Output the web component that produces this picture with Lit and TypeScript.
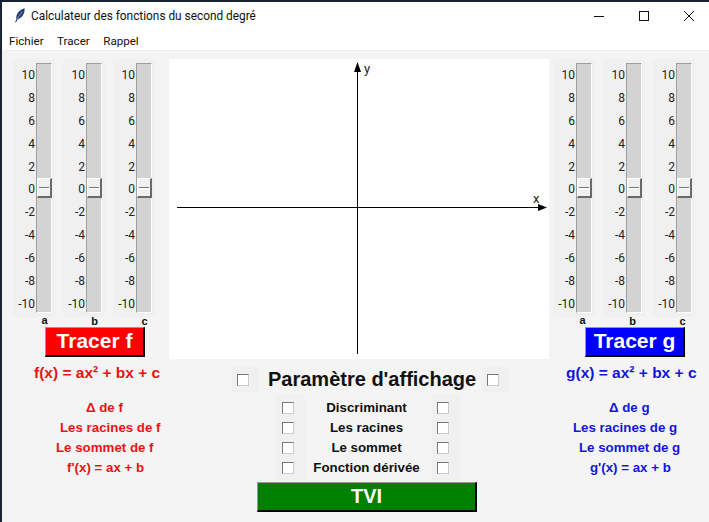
import { LitElement, html, css, svg } from "lit";
import { customElement } from "lit/decorators.js";

const TICKS = [10, 8, 6, 4, 2, 0, -2, -4, -6, -8, -10];
const LEFT_LABELS: [string, number][] = [["Δ de f", 84], ["Les racines de f", 58], ["Le sommet de f", 54], ["f'(x) = ax + b", 65]];
const RIGHT_LABELS: [string, number][] = [["Δ de g", 149], ["Les racines de g", 113], ["Le sommet de g", 119], ["g'(x) = ax + b", 130]];
const MIDDLE = ["Discriminant", "Les racines", "Le sommet", "Fonction dérivée"];

@customElement("app-root")
export class AppRoot extends LitElement {
  static styles = css`
    :host { display: block; width: 709px; height: 522px; background: #1b2433; padding: 2px 0 0 2px; box-sizing: border-box; overflow: hidden; font-family: "Liberation Sans", Arial, sans-serif; color: #111; }
    .win { width: 709px; height: 520px; background: #f4f4f4; display: flex; flex-direction: column; }
    .title { height: 28px; background: #fff; display: flex; align-items: center; flex: none; font: 11.85px Roboto, sans-serif; color: #111; padding-left: 10px; }
    .feather { width: 14px; height: 16px; margin-right: 5px; flex: none; }
    .title .txt { flex: 1; }
    .ctl { width: 45px; height: 28px; display: flex; align-items: center; justify-content: center; flex: none; }
    .menu { height: 18px; padding: 2px 0 0 7px; background: #fff; display: flex; align-items: center; flex: none; gap: 13.500px; font: 11.600px Roboto, sans-serif; border-bottom: 1px solid #ededed; }
    .main { display: grid; grid-template-columns: 167px 380px 1fr; height: 343px; flex: none; }
    .side { display: flex; flex-direction: column; align-items: center; }
    .sliders { display: flex; gap: 8px; padding: 8px 0 0 11px; align-self: flex-start; }
    .side.right .sliders { padding-left: 4px; }
    .slider { width: 42px; }
    .scale { height: 258px; background: #f0f0f0; box-sizing: border-box; padding: 4px 3px 4px 0; display: flex; justify-content: flex-end; gap: 1px; }
    .ticks { display: flex; flex-direction: column; justify-content: space-between; align-items: flex-end; padding: 4px 0 1px; font: 12px Roboto, sans-serif; line-height: 16px; color: #222; }
    .trough { width: 16px; box-sizing: border-box; background: #d3d3d3; border: 1px solid #fff; border-left-color: #a0a0a0; border-top-color: #a0a0a0; position: relative; }
    .thumb { position: absolute; left: 0; top: 114px; width: 15px; height: 20px; box-sizing: border-box; background: #f0f0f0; border: 1px solid #fff; border-right: 2px solid #6a6a6a; border-bottom: 2px solid #6a6a6a; }
    .thumb::after { content: ""; position: absolute; left: 1px; right: 1px; top: 8px; height: 1px; background: #777; box-shadow: 0 1px 0 #fff; }
    .letter { text-align: center; font-weight: 700; font-size: 11px; line-height: 12px; padding-left: 21px; height: 12px; margin-top: -3px; }
    .letter.low { position: relative; top: 1px; }
    .side.right .letter { padding-left: 17px; }
    .btn { box-sizing: border-box; color: #fff; font-weight: 700; display: flex; align-items: center; justify-content: center; border: 1px solid #999; border-right: 2px solid #000; border-bottom: 2px solid #000; }
    .tr { width: 100px; height: 30px; font-size: 21px; margin: 1px 0 0 43px; align-self: flex-start; padding-bottom: 2px; }
    .side.right .tr { margin-left: 36px; }
    .red { background: #f00; }
    .blue { background: #00f; }
    .formula { font-weight: 700; font-size: 15.5px; line-height: 18px; margin-top: 7px; align-self: flex-start; white-space: nowrap; }
    .side.left .formula { color: #e81414; margin-left: 32px; }
    .side.right .formula { color: #1414dc; margin-left: 17px; }
    .center { display: flex; flex-direction: column; }
    .canvas { width: 380px; height: 300px; background: #fff; margin-top: 8px; flex: none; display: block; }
    .param { display: flex; align-items: center; height: 25px; margin-top: 8px; padding-left: 63px; font-weight: 700; font-size: 20px; }
    .param b { margin: 0 6px 0 9px; white-space: nowrap; }
    .cbwrap { background: #f0f0f0; display: flex; align-items: center; box-sizing: border-box; padding-left: 5px; width: 27px; height: 25px; flex: none; }
    .cb { width: 12px; height: 12px; box-sizing: border-box; background: #fff; border: 1px solid #777; border-right-color: #ccc; border-bottom-color: #ccc; display: block; flex: none; }
    .opts { display: grid; grid-template-columns: 274px 29px 127px 28px 1fr; flex: none; margin-top: 4px; height: 80px; }
    .labels { display: flex; flex-direction: column; font-weight: 700; font-size: 13.3px; }
    .labels div { height: 20px; line-height: 20px; white-space: nowrap; }
    .labels.l { color: #e81414; }
    .labels.r { color: #1414dc; }
    .labels.c { color: #111; text-align: center; padding-right: 4px; }
    .ckcol { display: flex; flex-direction: column; justify-content: space-around; background: #f0f0f0; margin: -3px 0 -2px; padding: 3px 0 2px 5px; }
    .ckcol.first { padding-left: 6px; }
    .tviwrap { display: flex; flex: none; padding-left: 255px; margin-top: 4px; }
    .tvi { width: 220px; height: 30px; background: #008000; font-size: 20px; }
  `;

  private slider(letter: string, low: boolean) {
    return html`<div class="slider">
      <div class="scale">
        <div class="ticks">${TICKS.map((t) => html`<span>${t}</span>`)}</div>
        <div class="trough"><div class="thumb"></div></div>
      </div>
      <div class="letter ${low ? "low" : ""}">${letter}</div>
    </div>`;
  }

  private side(cls: string, btn: string, color: string, formula: string) {
    return html`<div class="side ${cls}">
      <div class="sliders">${this.slider("a", false)}${this.slider("b", true)}${this.slider("c", true)}</div>
      <div class="btn tr ${color}">${btn}</div>
      <div class="formula">${formula}</div>
    </div>`;
  }

  private graph() {
    return svg`<svg class="canvas" viewBox="0 0 380 300" xmlns="http://www.w3.org/2000/svg">
      <path d="M188.500 295V8M8 148.500H372" stroke="#000" stroke-width="1" fill="none"/>
      <path d="M188.500 3L185 13H192Z" fill="#000"/>
      <path d="M378 148.500L369 145V152Z" fill="#000"/>
      <text x="195" y="14" font-family="Roboto, sans-serif" font-size="13" fill="#222">y</text>
      <text x="364" y="144" font-family="Roboto, sans-serif" font-size="13" fill="#222">x</text>
    </svg>`;
  }

  private placed(items: [string, number][], cls: string) {
    return html`<div class="labels ${cls}">${items.map(([t, x]) => html`<div style="padding-left:${x}px">${t}</div>`)}</div>`;
  }

  render() {
    const cks = [0, 1, 2, 3].map(() => html`<span class="cb"></span>`);
    return html`<div class="win">
      <div class="title">
        <svg class="feather" viewBox="0 0 14 16"><path d="M3.200 14.500L4.300 11C3.800 6.500 7 2 12.600 .3C12.800 5 11 9.500 5.600 11.200L4 14.500Z" fill="#1f3870"/><path d="M4.800 11L10.500 3.500" stroke="#b9c6e2" stroke-width=".7" fill="none"/></svg>
        <span class="txt">Calculateur des fonctions du second degré</span>
        <span class="ctl"><svg width="10" height="10" viewBox="0 0 10 10"><path d="M0 5.500H10" stroke="#111"/></svg></span>
        <span class="ctl"><svg width="10" height="10" viewBox="0 0 10 10"><rect x=".5" y=".5" width="9" height="9" fill="none" stroke="#111"/></svg></span>
        <span class="ctl"><svg width="10" height="10" viewBox="0 0 10 10"><path d="M0 0L10 10M10 0L0 10" stroke="#111"/></svg></span>
      </div>
      <div class="menu"><span>Fichier</span><span>Tracer</span><span>Rappel</span></div>
      <div class="main">
        ${this.side("left", "Tracer f", "red", "f(x) = ax² + bx + c")}
        <div class="center">
          ${this.graph()}
          <div class="param">
            <span class="cbwrap"><span class="cb"></span></span>
            <b>Paramètre d'affichage</b>
            <span class="cbwrap"><span class="cb"></span></span>
          </div>
        </div>
        ${this.side("right", "Tracer g", "blue", "g(x) = ax² + bx + c")}
      </div>
      <div class="opts">
        ${this.placed(LEFT_LABELS, "l")}
        <div class="ckcol first">${cks}</div>
        <div class="labels c">${MIDDLE.map((t) => html`<div>${t}</div>`)}</div>
        <div class="ckcol">${cks}</div>
        ${this.placed(RIGHT_LABELS, "r")}
      </div>
      <div class="tviwrap"><div class="btn tvi">TVI</div></div>
    </div>`;
  }
}
